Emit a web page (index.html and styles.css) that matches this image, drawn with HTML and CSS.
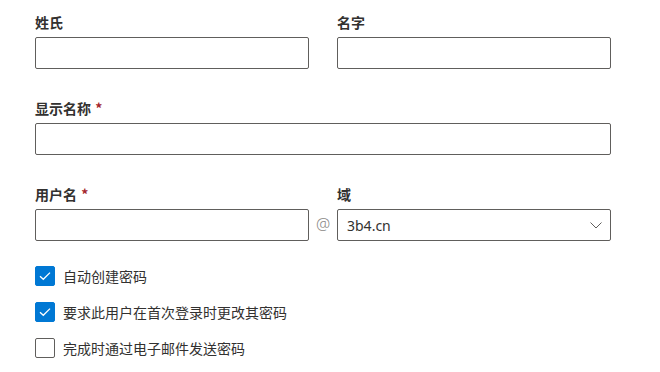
FILE: index.html
```html
<!DOCTYPE html>
<html lang="zh-CN">
<head>
<meta charset="utf-8">
<link rel="stylesheet" href="styles.css">
</head>
<body>
<div class="form">
  <div class="row two">
    <div class="field">
      <div class="label">姓氏</div>
      <div class="input"></div>
    </div>
    <div class="field">
      <div class="label">名字</div>
      <div class="input"></div>
    </div>
  </div>
  <div class="row">
    <div class="field">
      <div class="label">显示名称 <span class="req">*</span></div>
      <div class="input"></div>
    </div>
  </div>
  <div class="row user">
    <div class="field">
      <div class="label">用户名 <span class="req">*</span></div>
      <div class="input"></div>
    </div>
    <div class="at">@</div>
    <div class="field">
      <div class="label">域</div>
      <div class="input select">
        <span class="value">3b4.cn</span>
        <svg class="chev" width="12" height="7" viewBox="0 0 12 7"><path d="M0.5 0.5 L6 6 L11.5 0.5" fill="none" stroke="#605e5c" stroke-width="1"/></svg>
      </div>
    </div>
  </div>
  <div class="checks">
    <div class="check">
      <span class="box on"><svg width="12" height="10" viewBox="0 0 12 10"><path d="M1 5.2 L4.3 8.3 L11 1.6" fill="none" stroke="#fff" stroke-width="1.3"/></svg></span>
      <span class="ctext">自动创建密码</span>
    </div>
    <div class="check">
      <span class="box on"><svg width="12" height="10" viewBox="0 0 12 10"><path d="M1 5.2 L4.3 8.3 L11 1.6" fill="none" stroke="#fff" stroke-width="1.3"/></svg></span>
      <span class="ctext">要求此用户在首次登录时更改其密码</span>
    </div>
    <div class="check">
      <span class="box"></span>
      <span class="ctext">完成时通过电子邮件发送密码</span>
    </div>
  </div>
</div>
</body>
</html>
```
FILE: styles.css
```css
html, body {
  margin: 0;
  padding: 0;
  background: #ffffff;
}
body {
  font-family: "Noto Sans", "Noto Sans CJK SC", sans-serif;
  color: #323130;
  font-size: 14px;
}
.form {
  width: 576px;
  padding: 7px 0 0 35px;
  display: flex;
  flex-direction: column;
  gap: 24px;
}
.row {
  display: flex;
}
.row.two {
  gap: 28px;
}
.row > .field {
  flex: 1;
}
.row.two > .field, .row.user > .field {
  flex: 0 0 274px;
}
.label {
  height: 30px;
  line-height: 30px;
  font-weight: 600;
  font-size: 14px;
  font-family: "Noto Sans CJK SC", sans-serif;
  color: #323130;
}
.req {
  color: #a4262c;
  font-weight: 600;
  margin-left: 1px;
}
.input {
  box-sizing: border-box;
  height: 32px;
  border: 1px solid #605e5c;
  border-radius: 2px;
  background: #fff;
}
.at {
  flex: 0 0 28px;
  align-self: flex-end;
  height: 32px;
  line-height: 31px;
  text-align: center;
  color: #8a8886;
  font-size: 16px;
  font-family: "Noto Sans", sans-serif;
  font-weight: 300;
}
.select {
  display: flex;
  align-items: center;
  justify-content: space-between;
  padding: 0 8px 0 9px;
}
.value {
  font-family: "Noto Sans", sans-serif;
  font-size: 14px;
  color: #323130;
}
.chev {
  display: block;
}
.checks {
  display: flex;
  flex-direction: column;
  gap: 16px;
  margin-top: 1px;
}
.check {
  display: flex;
  align-items: center;
  height: 20px;
}
.box {
  box-sizing: border-box;
  width: 20px;
  height: 20px;
  border: 1px solid #605e5c;
  border-radius: 2px;
  display: flex;
  align-items: center;
  justify-content: center;
  margin-right: 8px;
}
.box.on {
  background: #0078d4;
  border-color: #0078d4;
}
.ctext {
  font-family: "Noto Sans CJK SC", sans-serif;
  font-size: 14px;
  color: #323130;
}
```
